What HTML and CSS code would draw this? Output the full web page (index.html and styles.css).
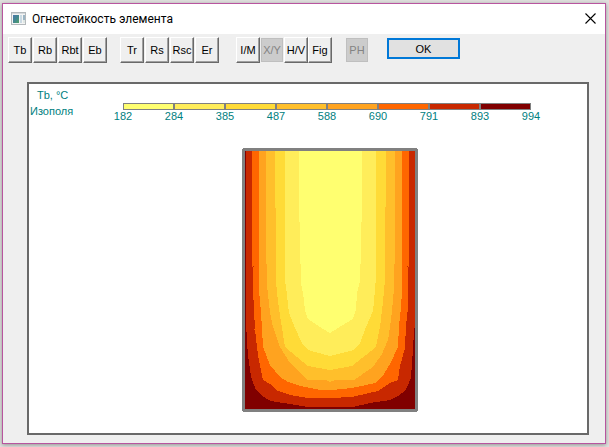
FILE: index.html
```html
<!DOCTYPE html>
<html lang="ru">
<head>
<meta charset="utf-8">
<title>Огнестойкость элемента</title>
<link rel="stylesheet" href="styles.css">
</head>
<body>
<main class="window">
  <header class="titlebar">
    <svg class="app-icon" width="15" height="13" viewBox="0 0 15 13" aria-hidden="true">
      <defs>
        <linearGradient id="pic" x1="0" y1="0" x2="1" y2="1">
          <stop offset="0" stop-color="#4c78ac"/>
          <stop offset=".5" stop-color="#43878f"/>
          <stop offset="1" stop-color="#4fa06a"/>
        </linearGradient>
      </defs>
      <rect x=".5" y=".5" width="14" height="12" fill="#f4f4f4" stroke="#b3b8bb"/>
      <rect x="1" y="1" width="13" height="1" fill="#d5d9dc"/>
      <rect x="2" y="3" width="6" height="8" fill="url(#pic)"/>
      <rect x="9" y="3" width="2" height="8" fill="#c9d9e3"/>
      <rect x="12" y="3" width="2" height="5" fill="#9cb5c4"/>
      <rect x="12" y="8" width="2" height="3" fill="#dfe7e4"/>
    </svg>
    <h1 class="title">Огнестойкость элемента</h1>
    <button class="close" type="button" aria-label="Закрыть">
      <svg width="11" height="11" viewBox="0 0 11 11"><path d="M.5 .5l10 10M10.500 .5l-10 10" stroke="#000" stroke-width="1.1" fill="none"/></svg>
    </button>
  </header>

  <div class="toolbar">
    <div class="group">
      <button class="tool" type="button">Tb</button>
      <button class="tool" type="button">Rb</button>
      <button class="tool" type="button">Rbt</button>
      <button class="tool" type="button">Eb</button>
    </div>
    <div class="group">
      <button class="tool" type="button">Tr</button>
      <button class="tool" type="button">Rs</button>
      <button class="tool" type="button">Rsc</button>
      <button class="tool" type="button">Er</button>
    </div>
    <div class="group group-tight">
      <button class="tool" type="button">I/M</button>
      <button class="tool" type="button" disabled>X/Y</button>
      <button class="tool" type="button">H/V</button>
      <button class="tool" type="button">Fig</button>
    </div>
    <button class="tool" type="button" disabled>PH</button>
    <button class="ok" type="button">OK</button>
  </div>

  <section class="panel">
    <div class="legend">
      <div class="caption">
        <div class="quantity">Tb, °C</div>
        <div>Изополя</div>
      </div>
      <div class="scale">
        <div class="bar">
          <span class="step l1"></span><span class="step l2"></span><span class="step l3"></span><span class="step l4"></span><span class="step l5"></span><span class="step l6"></span><span class="step l7"></span><span class="step l8"></span>
        </div>
        <div class="values">
          <span>182</span><span>284</span><span>385</span><span>487</span><span>588</span><span>690</span><span>791</span><span>893</span><span>994</span>
        </div>
      </div>
    </div>
    <div class="plot">
      <svg width="176" height="264" viewBox="242 148 176 264" shape-rendering="crispEdges" role="img" aria-label="Изополя температуры">
        <path fill="#808080" d="M243 148H417V149H418V411H417V412H243V411H242V149H243Z"/>
        <rect x="245" y="151" width="170" height="258" fill="#800000"/>
        <path fill="#c82800" d="M246 151V320L247 343 248 355 250 370 252 380 256 390 262 396 271 401 290 404 308 407H353L370 403 390 400 398 396 405 391 408 385 411 378 412 362 413 350 414 330 415 327V151Z"/>
        <path fill="#ff6600" d="M252 151V267H253V290L254 310 255 330 258 355 263 380 270 384 278 391 290 395 308 398H330L352 397 378 391 390 383 398 380 400 366 405 348 406 325 408 308V267L409 266V151ZM254 329h1v1h-1z"/>
        <path fill="#ffa31f" d="M259 151V290L261 312 263 347 270 365 280 377 288 382 300 386 320 390H332L352 388 366 385 375 383 382 377 390 364 398 347 399 325 401 308 402 290V151Z"/>
        <path fill="#ffbf2b" d="M266 151V264H267V285L270 313 273 327 280 347 290 363 308 380H326L330 382 335 380H354L373 367 382 354 388 340 391 320 393 300 394 288V264H395V151Z"/>
        <path fill="#ffdb37" d="M275 151V208H276V282L278 302 281 322 285 347 297 357 308 366 330 370 352 366 376 347 380 327 383 302 385 280V207H386V151Z"/>
        <path fill="#ffed5a" d="M285 151V280L287 295 289 313 295 328 302 343 308 350 330 356 354 350 360 343 366 327 373 311 375 290 376 276V151Z"/>
        <path fill="#ffff70" d="M299 151V222H300V264H301V283L303 293 305 310 308 319 320 327 330 333 338 328 353 319 356 310 357 293 360 281V264H361V222H362V151Z"/>
        <path fill="#c82800" d="M253 266h1v1h-1zM252 267h1v2h-1zM407 266h1v1h-1zM408 267h1v2h-1z"/>
      </svg>
    </div>
  </section>
</main>
</body>
</html>
```
FILE: styles.css
```css
* {
  box-sizing: border-box;
}

body {
  margin: 0;
  min-height: 100vh;
  padding: 3px 3px 3px 2px;
  display: flex;
  background: #e0e0de;
  font: 11px/14px "Liberation Sans", Arial, sans-serif;
}

.window {
  flex: 1;
  display: flex;
  flex-direction: column;
  border: 1px solid #b8559f;
  background: #efefef;
  box-shadow: 0 1px 4px rgba(0, 0, 0, 0.35);
}

.titlebar {
  display: flex;
  align-items: center;
  height: 30px;
  padding: 0 9px 1px 8px;
  gap: 6px;
  background: #fff;
}

.title {
  flex: 1;
  margin: 0;
  font: 12px/16px Roboto, "Noto Sans", sans-serif;
  color: #000;
}

.close {
  display: flex;
  padding: 0;
  border: 0;
  background: none;
}

.toolbar {
  display: flex;
  align-items: flex-start;
  padding: 3px 5px 0;
  gap: 13px;
}

.group {
  display: flex;
  gap: 1px;
}

.group-tight {
  gap: 0;
  margin-left: 4px;
}

.tool {
  width: 24px;
  height: 26px;
  padding: 0;
  border: 1px solid;
  border-color: #fff #696969 #696969 #fff;
  box-shadow: inset -1px -1px #a0a0a0;
  background: #efefef;
  font: 11px/14px "Liberation Sans", Arial, sans-serif;
  text-align: center;
  white-space: nowrap;
  color: #000;
}

.tool:disabled {
  border-color: transparent;
  box-shadow: inset 0 0 0 1px #bfbfbf;
  background: #ccc;
  background-clip: padding-box;
  color: #838383;
}

.ok {
  width: 73px;
  height: 21px;
  margin: 1px 0 0 5px;
  padding: 0;
  border: 2px solid #0078d7;
  background: #e1e1e1;
  font: 11px/14px "Liberation Sans", Arial, sans-serif;
  color: #000;
}

.panel {
  flex: 1;
  margin: 19px 16px 8px 24px;
  border: 2px solid #696969;
  background: #fff;
  color: #008080;
}

.legend {
  display: flex;
  padding: 4px 56px 0 1px;
}

.caption {
  width: 93px;
}

.caption div + div {
  margin-top: 2px;
}

.quantity {
  padding-left: 7px;
}

.scale {
  flex: 1;
  padding-top: 15px;
}

.bar {
  display: flex;
  height: 7px;
}

.step {
  flex: 1;
  border: 1px solid #808080;
}

.l1 { background: #ffff70; }
.l2 { background: #ffed5a; }
.l3 { background: #ffdb37; }
.l4 { background: #ffbf2b; }
.l5 { background: #ffa31f; }
.l6 { background: #ff6600; }
.l7 { background: #c82800; }
.l8 { background: #800000; }

.values {
  display: flex;
  justify-content: space-between;
  line-height: 12px;
}

.values span {
  display: flex;
  justify-content: center;
  width: 0;
}

.plot {
  display: flex;
  justify-content: center;
  padding: 26px 0 21px 44px;
}
```
